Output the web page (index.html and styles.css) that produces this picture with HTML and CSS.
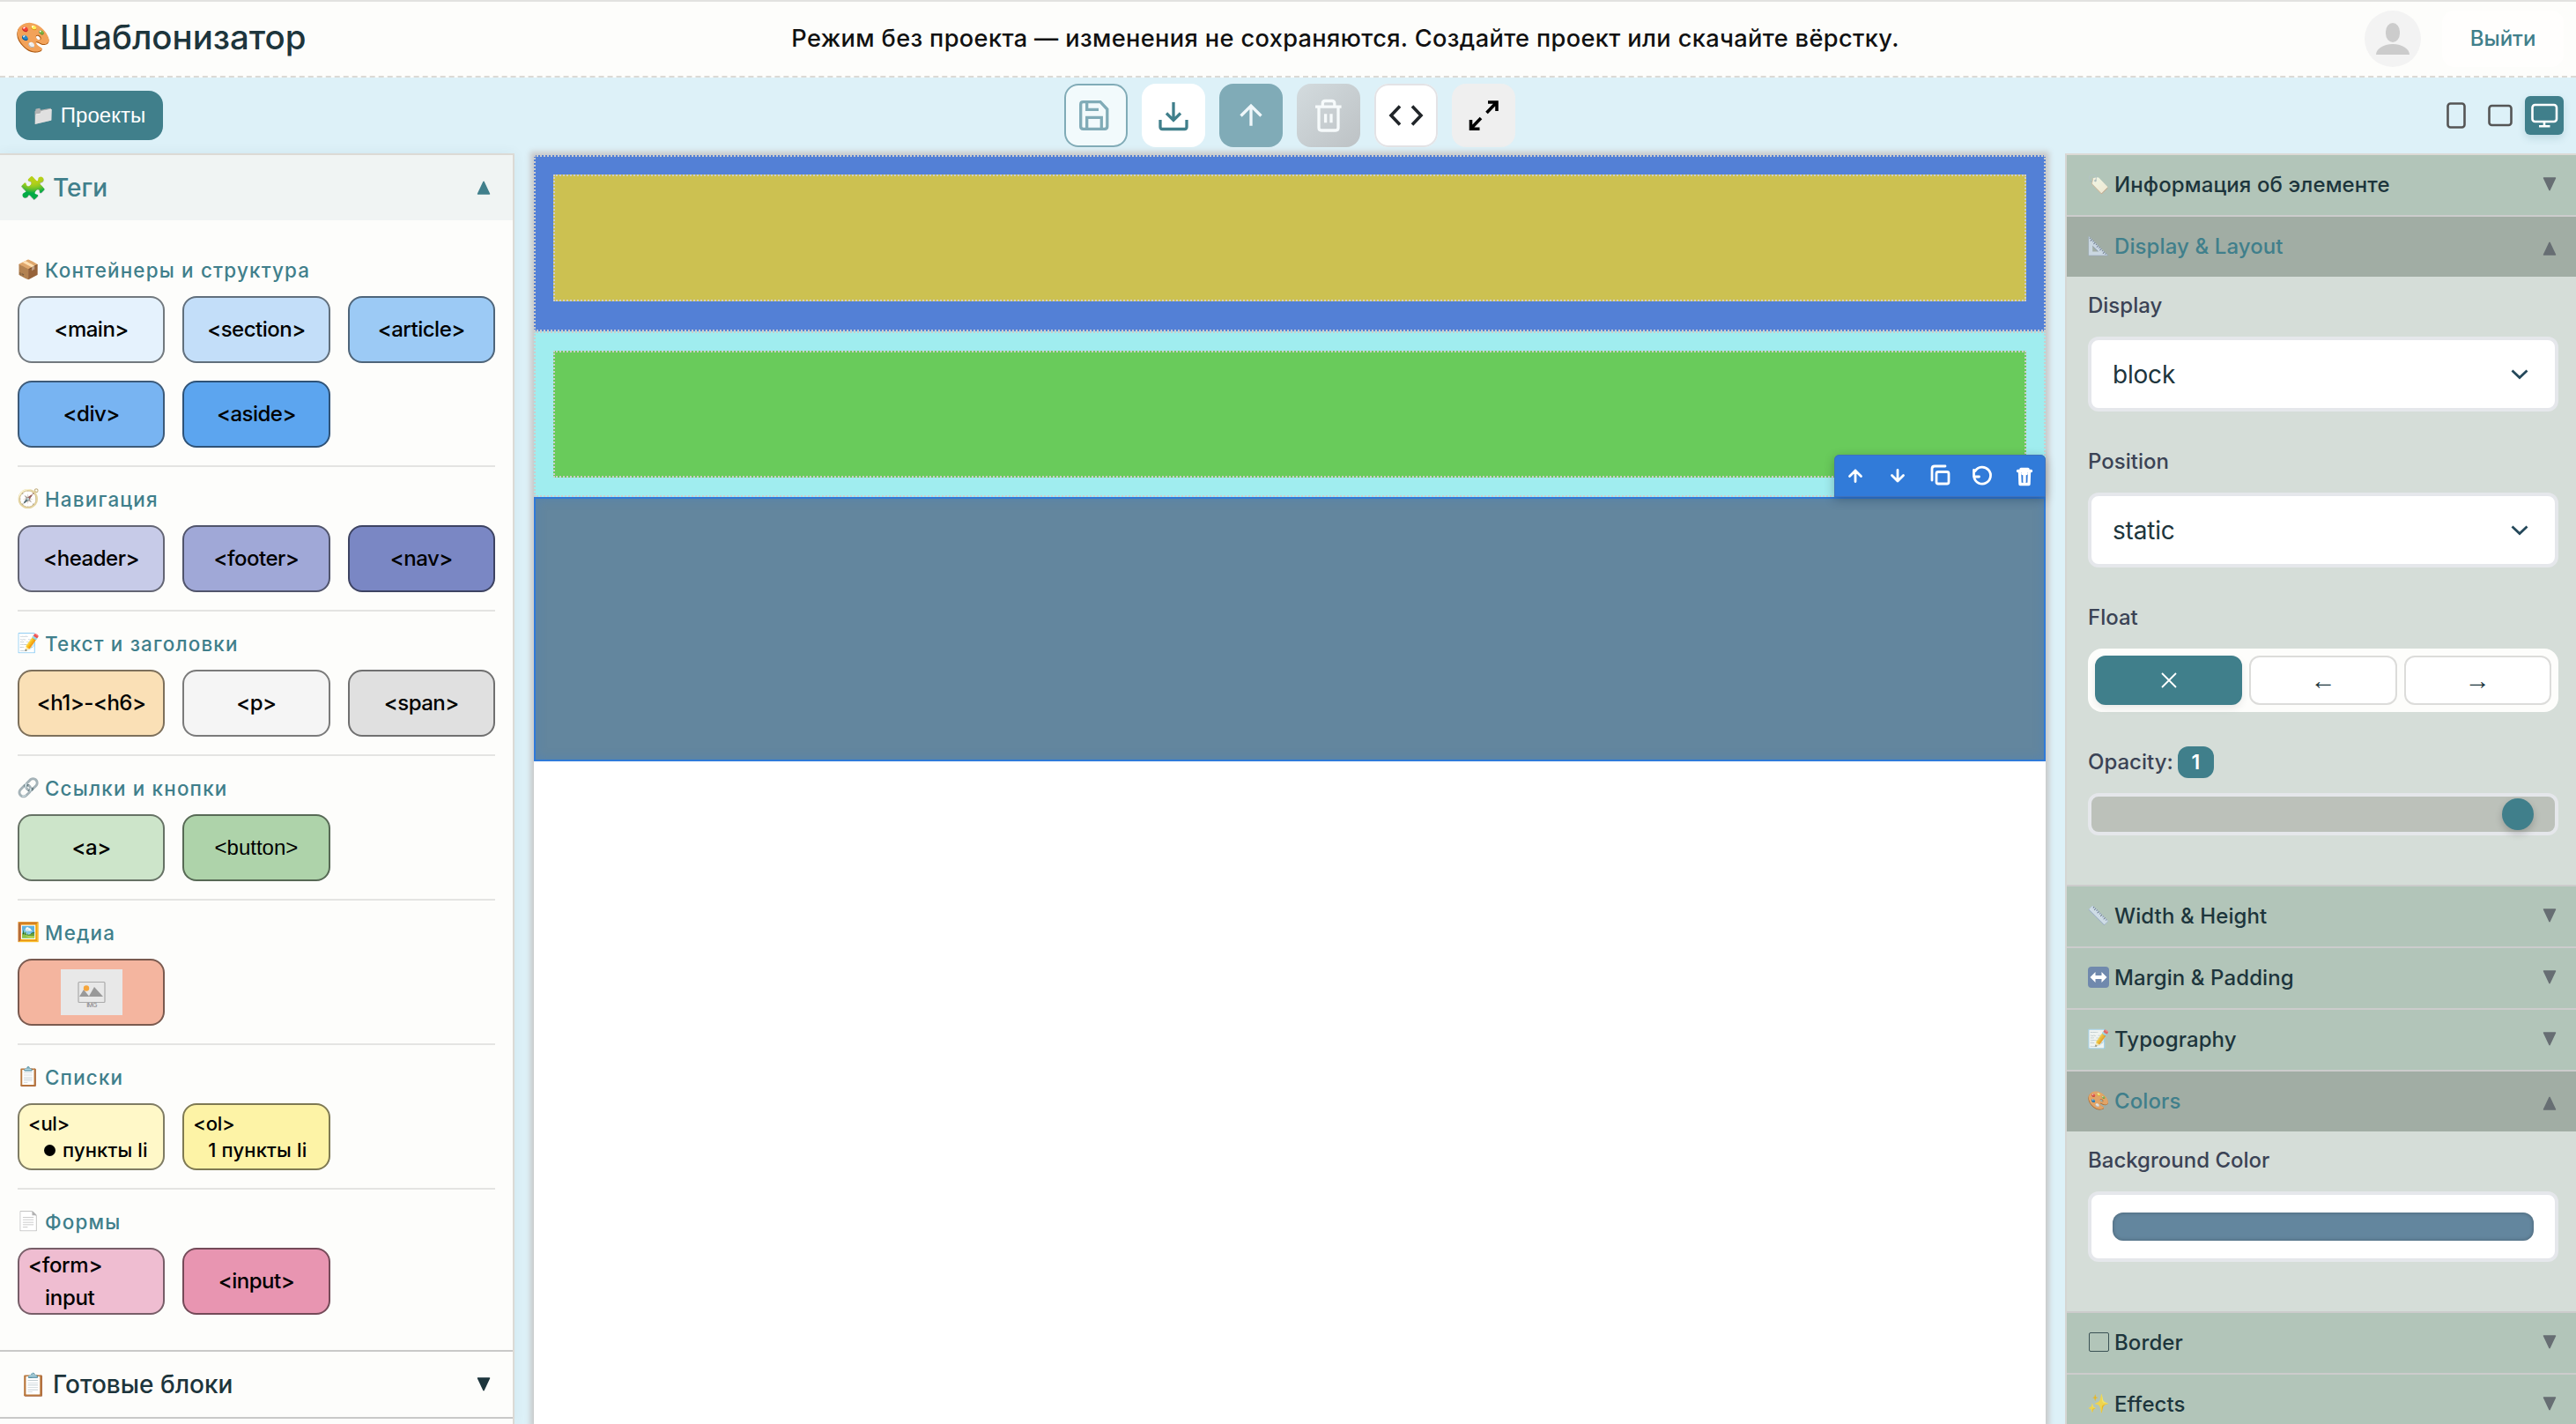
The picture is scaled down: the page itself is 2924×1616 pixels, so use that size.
FILE: index.html
```html
<!DOCTYPE html>
<html lang="ru">
<head>
<meta charset="utf-8">
<title>Шаблонизатор</title>
<link rel="stylesheet" href="styles.css">
</head>
<body>
<svg class="defs" width="0" height="0">
  <symbol id="tri-down" viewBox="0 0 16 16"><path d="M1.500 1h13L8 14.600z" fill="currentColor" stroke="currentColor" stroke-width="1.500" stroke-linejoin="round"/></symbol>
  <symbol id="tri-up" viewBox="0 0 16 16"><path d="M1.500 15h13L8 1.400z" fill="currentColor" stroke="currentColor" stroke-width="1.500" stroke-linejoin="round"/></symbol>
  <symbol id="chevron" viewBox="0 0 20 12"><path d="M1.500 1.500L10 9.500l8.500-8" fill="none" stroke="currentColor" stroke-width="2.800"/></symbol>
</svg>
<div class="app">
  <header class="header">
    <div class="brand"><span class="emoji emoji-xl">🎨</span><h1 class="brand-name">Шаблонизатор</h1></div>
    <p class="notice">Режим без проекта — изменения не сохраняются. Создайте проект или скачайте вёрстку.</p>
    <div class="account">
      <svg class="avatar" viewBox="0 0 64 64"><circle cx="32" cy="32" r="32" fill="#f3f3f3"/><rect x="24" y="14" width="16" height="22" rx="8" ry="10" fill="#ccc"/><path d="M13 50c0-6 8-12 19-12s19 6 19 12z" fill="#ccc"/></svg>
      <button class="logout">Выйти</button>
    </div>
  </header>

  <div class="toolbar">
    <button class="projects"><span class="emoji emoji-md folder">📁</span><span>Проекты</span></button>
    <div class="actions">
      <button class="action action-save"><svg viewBox="0 0 72 72"><path d="M21.500 20.700H41L48.800 29v19.500q0 2.800-2.800 2.800H21.500q-2.800 0-2.800-2.800v-25q0-2.800 2.800-2.800zM25.700 20.700v8.600H39M25.700 51v-12.700h16.600V51"/></svg></button>
      <button class="action action-download"><svg viewBox="0 0 72 72"><path d="M36 21v20M28 33.500l8 8 8-8M21 41v8q0 2.500 2.500 2.500h25q2.500 0 2.500-2.500v-8"/></svg></button>
      <button class="action action-up"><svg viewBox="0 0 72 72"><path d="M36 47.700V25M24.500 36.500L36 25l11.500 11.500"/></svg></button>
      <button class="action action-trash"><svg viewBox="0 0 72 72"><path d="M21 26.200h29.600M29.300 26v-3.500q0-3 3-3h7.500q3 0 3 3V26M25 26v24q0 3 3 3h16q3 0 3-3V26M32.600 34.300v10M39 34.300v10"/></svg></button>
      <button class="action action-code"><svg viewBox="0 0 72 72"><path d="M29 25.500L19 36l10 10.500M43 25.500L53 36 43 46.500"/></svg></button>
      <button class="action action-full"><svg viewBox="0 0 72 72"><path d="M39.500 33l11-11.500M41 21h10v10M33 39L22 50.500M21.500 41v10.200h10"/></svg></button>
    </div>
    <div class="devices">
      <svg class="device" viewBox="0 0 44 44"><rect x="12.500" y="8.500" width="19" height="27" rx="3" fill="none" stroke="#555" stroke-width="2.600"/></svg>
      <svg class="device device-tablet" viewBox="0 0 44 44"><rect x="9.500" y="11" width="25" height="22" rx="3" fill="none" stroke="#555" stroke-width="2.600"/></svg>
      <svg class="device device-active" viewBox="0 0 44 44"><rect x="8.500" y="10" width="27.500" height="19" rx="3" fill="none" stroke="#fff" stroke-width="2.600"/><path d="M22 29v5M16 34.200h12.500" stroke="#fff" stroke-width="2.600" fill="none"/></svg>
    </div>
  </div>

  <div class="workspace">
    <aside class="sidebar">
      <div class="side-head side-head-open"><span class="emoji emoji-lg">🧩</span><span class="side-name">Теги</span><svg class="tri"><use href="#tri-up"/></svg></div>
      <div class="groups">
        <section class="group"><h2 class="group-title"><span class="emoji emoji-md">📦</span>Контейнеры и структура</h2>
          <div class="tags"><div class="tag main">&lt;main&gt;</div><div class="tag section">&lt;section&gt;</div><div class="tag article">&lt;article&gt;</div><div class="tag div">&lt;div&gt;</div><div class="tag aside">&lt;aside&gt;</div></div></section>
        <section class="group"><h2 class="group-title"><span class="emoji emoji-md compass">🧭</span>Навигация</h2>
          <div class="tags"><div class="tag header-tag">&lt;header&gt;</div><div class="tag footer-tag">&lt;footer&gt;</div><div class="tag nav-tag">&lt;nav&gt;</div></div></section>
        <section class="group"><h2 class="group-title"><span class="emoji emoji-md">📝</span>Текст и заголовки</h2>
          <div class="tags"><div class="tag heading-tag">&lt;h1&gt;-&lt;h6&gt;</div><div class="tag p-tag">&lt;p&gt;</div><div class="tag span-tag">&lt;span&gt;</div></div></section>
        <section class="group"><h2 class="group-title"><span class="emoji emoji-md link">🔗</span>Ссылки и кнопки</h2>
          <div class="tags"><div class="tag a-tag">&lt;a&gt;</div><div class="tag button-tag">&lt;button&gt;</div></div></section>
        <section class="group"><h2 class="group-title"><span class="emoji emoji-md">🖼️</span>Медиа</h2>
          <div class="tags"><div class="tag img-tag"><svg width="70" height="52" viewBox="0 0 70 52"><rect width="70" height="52" fill="#e8e8e8"/><rect x="20" y="14.500" width="30" height="23" rx="1" fill="none" stroke="#aaa" stroke-width="1.200"/><path d="M21 31l5-8 6 7.500 6-10.500 10 11z" fill="#999"/><circle cx="29" cy="21.500" r="3.200" fill="#f5a53c"/><text x="35" y="43" text-anchor="middle" font-size="7" font-family="Liberation Sans, sans-serif" fill="#777">IMG</text></svg></div></div></section>
        <section class="group"><h2 class="group-title"><span class="emoji emoji-md">📋</span>Списки</h2>
          <div class="tags"><div class="tag stacked ul-tag"><span>&lt;ul&gt;</span><span class="item"><i class="bullet"></i>пункты li</span></div><div class="tag stacked ol-tag"><span>&lt;ol&gt;</span><span class="item item-number">1 пункты li</span></div></div></section>
        <section class="group"><h2 class="group-title"><span class="emoji emoji-md page">📄</span>Формы</h2>
          <div class="tags"><div class="tag stacked form-tag"><span>&lt;form&gt;</span><span class="nested">input</span></div><div class="tag input-tag">&lt;input&gt;</div></div></section>
      </div>
      <div class="side-head side-head-closed"><span class="emoji emoji-lg">📋</span><span class="side-name">Готовые блоки</span><svg class="tri"><use href="#tri-down"/></svg></div>
    </aside>

    <main class="canvas">
      <div class="block block-blue"><div class="inner inner-yellow"></div></div>
      <div class="block block-cyan"><div class="inner inner-green"></div></div>
      <div class="selected">
        <svg class="block-tools" viewBox="0 0 240 48"><g fill="none" stroke="#fff" stroke-width="2.800" stroke-linecap="round" stroke-linejoin="round"><path d="M24 30.500V18M17.500 24.500L24 18l6.500 6.500M72 17.500V30M65.500 23.500L72 30l6.500-6.500"/><path d="M111 29V16q0-3 3-3h12"/><rect x="116" y="19.500" width="14" height="13.500" rx="2"/><path d="M160 18.500a9.500 9.500 0 1 1-1.300 7M158.500 17.500V25h6"/><path d="M208.500 18.500h15M212 16.500h8M210.500 19l.500 14.500h10l.500-14.500M214 21.500h4M216 21.500v9" stroke-width="3.400"/></g></svg>
      </div>
    </main>

    <aside class="inspector">
      <div class="panel-head"><span class="emoji emoji-sm tag-icon">🏷️</span>Информация об элементе<svg class="tri"><use href="#tri-down"/></svg></div>
      <div class="panel-head panel-head-open"><span class="emoji emoji-sm ruler">📐</span>Display &amp; Layout<svg class="tri"><use href="#tri-up"/></svg></div>
      <div class="panel-body">
        <div class="field"><label class="label">Display</label><div class="select">block<svg class="chevron"><use href="#chevron"/></svg></div></div>
        <div class="field"><label class="label">Position</label><div class="select">static<svg class="chevron"><use href="#chevron"/></svg></div></div>
        <div class="field"><label class="label">Float</label>
          <div class="segments"><button class="segment segment-on"><svg width="18" height="18" viewBox="0 0 18 18"><path d="M1 1l16 16M17 1L1 17" stroke="#fff" stroke-width="1.800"/></svg></button><button class="segment">←</button><button class="segment">→</button></div></div>
        <div class="field"><label class="label">Opacity:<span class="value">1</span></label><div class="slider"><span class="thumb"></span></div></div>
      </div>
      <div class="panel-head"><span class="emoji emoji-sm ruler">📏</span>Width &amp; Height<svg class="tri"><use href="#tri-down"/></svg></div>
      <div class="panel-head"><svg class="resize-icon" viewBox="0 0 24 24"><rect width="24" height="24" rx="4" fill="#7089ad"/><path d="M2.500 12l6-6v4h7V6l6 6-6 6v-4h-7v4z" fill="#fff"/></svg>Margin &amp; Padding<svg class="tri"><use href="#tri-down"/></svg></div>
      <div class="panel-head"><span class="emoji emoji-sm">📝</span>Typography<svg class="tri"><use href="#tri-down"/></svg></div>
      <div class="panel-head panel-head-open"><span class="emoji emoji-sm">🎨</span>Colors<svg class="tri"><use href="#tri-up"/></svg></div>
      <div class="panel-body">
        <div class="field"><label class="label">Background Color</label><div class="color-box"><div class="swatch"></div></div></div>
      </div>
      <div class="panel-head"><span class="emoji emoji-sm"><i class="square"></i></span>Border<svg class="tri"><use href="#tri-down"/></svg></div>
      <div class="panel-head"><span class="emoji emoji-sm">✨</span>Effects<svg class="tri"><use href="#tri-down"/></svg></div>
    </aside>
  </div>
</div>
</body>
</html>
```
FILE: styles.css
```css
* { box-sizing: border-box; }
body { margin: 0; font-family: Inter, "Liberation Sans", sans-serif; font-size: 24px; color: #1d353c; background: #ddf1f8; overflow: hidden; }
h1, h2, p { margin: 0; font-weight: inherit; }
button { font: inherit; padding: 0; border: 0; background: none; color: inherit; }
.defs { display: none; }
.app { display: flex; flex-direction: column; height: 1616px; }

.emoji { display: inline-flex; align-items: center; justify-content: center; flex: none; font-family: "Noto Color Emoji", sans-serif; letter-spacing: 0; line-height: 1; }
.emoji-xl { width: 40px; font-size: 33px; margin-right: 10px; }
.emoji-lg { width: 28px; font-size: 25px; margin-right: 8px; }
.emoji-md { width: 24px; font-size: 21px; margin-right: 7px; }
.emoji-sm { width: 24px; font-size: 20.500px; margin-right: 6px; opacity: .8; }
.folder, .page { filter: grayscale(1); }
.compass, .link { filter: grayscale(.7) brightness(1.05); }
.tag-icon { filter: saturate(.3) brightness(1.15); }
.ruler { filter: hue-rotate(180deg) saturate(.3) brightness(1.1); }
.resize-icon { width: 24px; height: 24px; margin-right: 6px; }
.tri { width: 16px; height: 16px; margin-left: auto; flex: none; }

.header { height: 88px; flex: none; display: grid; grid-template-columns: 1fr auto 1fr; align-items: center; padding: 0 14px 0 18px; background: #fdfdfb; border-top: 2px solid #e2e2e0; border-bottom: 2px dashed #dcdad5; }
.brand { display: flex; align-items: center; margin-top: -4px; }
.brand-name { font-size: 38.400px; font-weight: 500; letter-spacing: 0; white-space: nowrap; }
.notice { font-size: 27.200px; font-weight: 450; letter-spacing: .36px; color: #111; white-space: nowrap; position: relative; left: 63px; top: -1px; }
.account { display: flex; justify-content: flex-end; align-items: center; gap: 24px; }
.avatar { width: 64px; height: 64px; }
.logout { width: 138px; height: 64px; border-radius: 14px; background: #fffefd; color: #407f8b; font-weight: 500; padding-bottom: 2px; }

.toolbar { height: 86px; flex: none; display: grid; grid-template-columns: 1fr auto 1fr; align-items: center; padding: 0 14px 0 18px; }
.projects { width: 167px; height: 56px; border-radius: 16px; background: #407f8b; color: #fff; font-family: "Liberation Sans", sans-serif; font-size: 24px; display: flex; align-items: center; justify-content: center; }
.actions { display: flex; gap: 16px; }
.action { width: 72px; height: 72px; border-radius: 16px; overflow: hidden; }
.action svg { display: block; width: 72px; height: 72px; fill: none; stroke: currentColor; stroke-width: 3.300px; }
.action-save { background: #f2fafc; color: #80abb7; box-shadow: inset 0 0 0 2px #80abb7; }
.action-download { background: #fff; color: #407f8b; }
.action-up { background: #80abb7; color: #eff7fa; }
.action-trash { background: linear-gradient(135deg, #d3dbde, #bdc2c5); color: #f6fafb; }
.action-code { background: #fff; color: #212529; box-shadow: inset 0 0 0 2px #e3e3e6; }
.action-full { background: #efefef; color: #000; }
.action-full svg, .action-code svg { stroke-width: 3.600px; }
.devices { display: flex; justify-content: flex-end; gap: 6px; }
.device { width: 44px; height: 44px; border-radius: 6px; }
.device-active { background: #407f8b; box-shadow: 0 4px 8px rgba(64,127,139,.2); }

.workspace { flex: 1; min-height: 0; display: grid; grid-template-columns: 584px 1716px 580px; column-gap: 22px; }

.sidebar { background: #fdfdfb; border-top: 2px solid #dcdad5; border-right: 2px solid #dcdad5; box-shadow: 0 0 14px rgba(0,60,80,.06); overflow: hidden; }
.side-head { display: flex; align-items: center; height: 74px; padding: 0 25px 0 24px; font-size: 28px; font-weight: 450; letter-spacing: 0; }
.side-head-open { background: #f0f4f3; color: #407f8b; }
.side-head-closed { height: 78px; border-top: 2px solid #c9c9c8; border-bottom: 2px solid #c9c9c8; }
.groups { padding: 20px; }
.group { padding-bottom: 20px; }
.group + .group { border-top: 2px solid #e4e4e2; }
.group-title { height: 66px; display: flex; align-items: center; padding-top: 7px; font-size: 22.400px; font-weight: 450; letter-spacing: 1.200px; color: #407f8b; white-space: nowrap; }
.tags { display: grid; grid-template-columns: repeat(3, 167.300px); column-gap: 20px; row-gap: 20px; }
.tag { height: 76px; display: flex; align-items: center; justify-content: center; border: 2px solid rgba(0,0,0,.5); border-radius: 16px; color: #000; font-weight: 500; letter-spacing: -.5px; padding-bottom: 2px; white-space: nowrap; }
.main { background: #e5f2fd; } .section { background: #c3def9; } .article { background: #9ccaf5; }
.div { background: #78b4f2; } .aside { background: #5ca5ef; }
.header-tag { background: #c7cbe8; } .footer-tag { background: #a0a8d7; } .nav-tag { background: #7a87c4; }
.heading-tag { background: #fae0b6; } .p-tag { background: #f5f5f5; } .span-tag { background: #e0e0e0; }
.a-tag { background: #cde5ca; } .button-tag { background: #aed3aa; font-family: "Liberation Sans", sans-serif; font-weight: 400; letter-spacing: 0; padding: 0; }
.img-tag { background: #f4b59f; padding: 0; }
.ul-tag { background: #fff8c8; } .ol-tag { background: #fdf3a6; }
.form-tag { background: #efbdd1; } .input-tag { background: #e895b1; }
.stacked { flex-direction: column; align-items: flex-start; padding: 0 0 0 10px; font-size: 22px; line-height: 30px; letter-spacing: -.3px; }
.form-tag { font-size: 24px; line-height: 37px; }
.item { display: flex; align-items: center; padding-left: 18px; letter-spacing: .15px; }
.item-number { padding-left: 17px; }
.bullet { width: 13px; height: 13px; border-radius: 50%; background: #000; margin-right: 8px; }
.nested { padding-left: 19px; }

.canvas { margin-top: 2px; background: #fff; box-shadow: 0 0 6px 4px #c9c9c9; }
.block { border: 2px dotted #ccc; padding: 20px; }
.block-blue { height: 200px; background: #5380d6; }
.block-cyan { height: 188px; background: #a0edef; }
.inner { height: 144px; border: 2px dotted #ccc; }
.inner-yellow { background: #ccc151; }
.inner-green { background: #69cb5b; }
.selected { position: relative; height: 300px; background: #63869e; border: 2px solid #2f7ad9; box-shadow: inset 0 0 12px rgba(64,127,200,.4); }
.block-tools { position: absolute; right: -2px; top: -50px; width: 240px; height: 48px; background: #317bd9; border-radius: 6px 6px 0 0; box-shadow: 0 3px 12px rgba(0,0,0,.25), inset 0 0 0 1px #3f72bb; }

.inspector { border-top: 2px solid #dcdad5; border-left: 2px solid #d5d6d3; background: #d5ddd8; overflow: hidden; }
.panel-head { height: 70px; display: flex; align-items: center; padding: 0 22px 2px 24px; border-bottom: 2px solid #ccc; background: #b2c5b9; font-weight: 500; letter-spacing: .1px; white-space: nowrap; }
.panel-head .tri { color: #676e73; }
.panel-head-open { height: 68px; border-bottom: 0; background: #a1ada4; color: #407f8b; }
.panel-head-open .tri { position: relative; top: 3px; }
.panel-body { padding: 0 20px 32px 24px; border-bottom: 2px solid #ccc; }
.field { margin-bottom: 24px; }
.label { height: 68px; display: flex; align-items: center; padding-bottom: 3px; font-weight: 500; color: #3b4355; letter-spacing: 0; }
.select { height: 85px; display: flex; align-items: center; justify-content: space-between; padding: 0 30px 0 24px; border: 4px solid #e5e7eb; border-radius: 12px; background: #fff; font-size: 28px; letter-spacing: -.2px; }
.chevron { width: 20px; height: 12px; color: #24485a; }
.segments { height: 72px; display: grid; grid-template-columns: repeat(3, 1fr); gap: 8px; padding: 8px; border-radius: 16px; background: #fdfdfb; }
.segment { height: 56px; display: flex; align-items: center; justify-content: center; border: 2px solid #dcdcda; border-radius: 12px; background: #fff; font-family: "Liberation Sans", sans-serif; font-size: 29px; }
.segment-on { background: #407f8b; border-color: #407f8b; box-shadow: 0 4px 8px rgba(0,0,0,.08); }
.value { width: 41px; height: 36px; margin-left: 5px; display: flex; align-items: center; justify-content: center; border-radius: 12px; background: #407f8b; color: #fff; font-weight: 600; font-size: 23px; }
.slider { height: 48px; display: flex; align-items: center; justify-content: flex-end; padding-right: 24px; border: 4px solid #e5e7eb; border-radius: 12px; background: #bcc1ba; }
.thumb { width: 36px; height: 36px; border-radius: 50%; background: #407f8b; box-shadow: 0 4px 8px rgba(0,0,0,.2); }
.color-box { height: 80px; padding: 20px 24px; border: 4px solid #e5e7eb; border-radius: 12px; background: #fff; }
.swatch { height: 32px; border-radius: 12px; background: #63869e; box-shadow: inset 0 0 4px rgba(0,0,0,.3); }
.square { width: 23px; height: 22px; border: 1.500px solid #1d353c; border-radius: 2px; }
```
